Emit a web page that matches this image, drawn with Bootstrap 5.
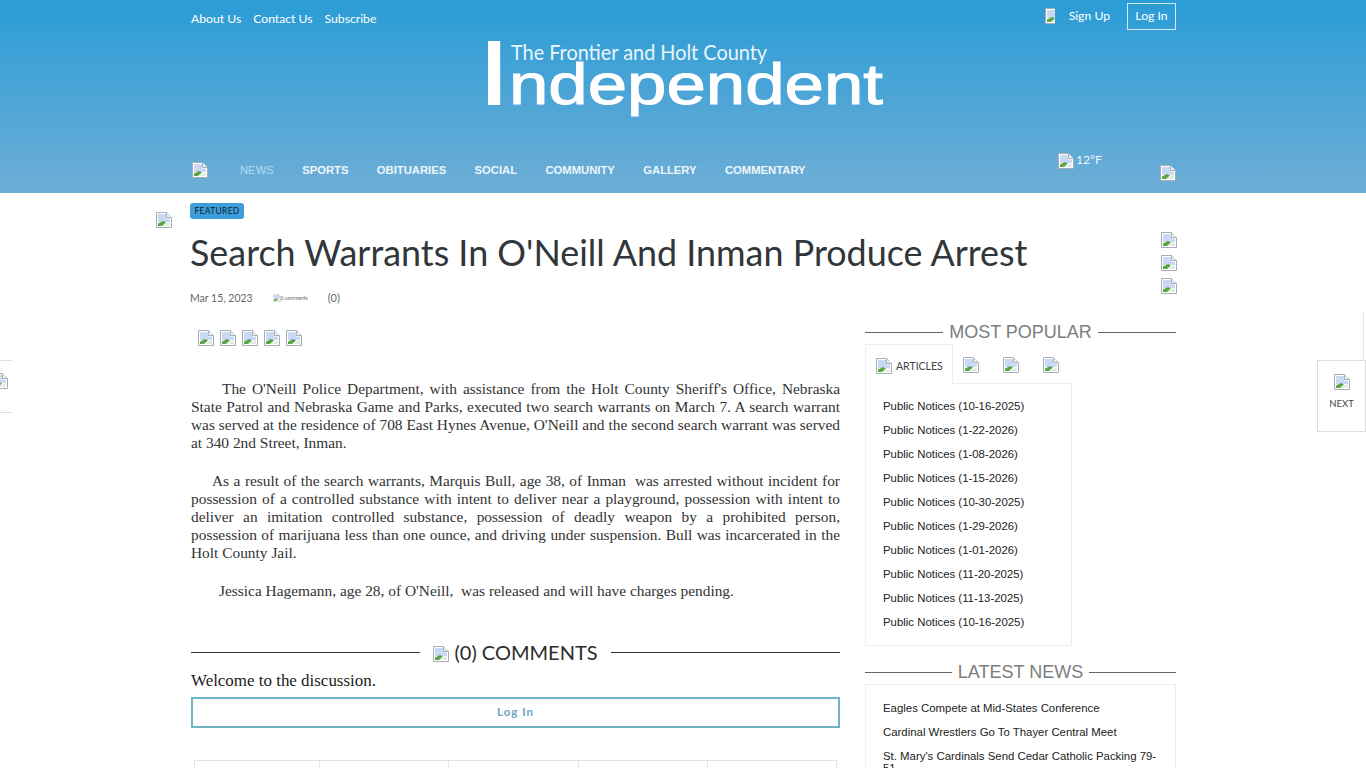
<!DOCTYPE html>
<html lang="en">
<head>
    <meta charset="UTF-8">
    <meta name="viewport" content="width=device-width, initial-scale=1, shrink-to-fit=no">
    <title>Search Warrants In O'Neill And Inman Produce Arrest</title>
    <link rel="stylesheet" href="https://cdn.jsdelivr.net/npm/bootstrap@5.3.0/dist/css/bootstrap.min.css">
    <style>
        html, body { height: 768px; overflow: hidden; }
        body { font-family: "Liberation Serif", serif; color: #222; background: #fff; position: relative; }
        a { color: inherit; text-decoration: none; }
        .ni { width: 16px; height: 16px; display: inline-block; flex: none; vertical-align: top; }
        .wrap { width: 985px; margin-left: 191px; }

        .site-head { height: 193px; background: linear-gradient(#2a9cd6, #6eaed6); color: #fff; }
        .head-top { height: 41px; font-family: Lato, sans-serif; font-size: 12.2px; }
        .top-links { gap: 12px; padding-top: 10px; }
        .top-right { padding-top: 3px; }
        .signup { margin: 0 17px 0 0; line-height: 25px; }
        .signup .ni { width: 10px; margin: 5px 14px 0 0; }
        .login-box { width: 49px; height: 27px; border: 1px solid #cfeaf7; line-height: 24px; text-align: center; }
        .logo-svg { display: block; margin-left: 283px; width: 420px; height: 80px; }
        .main-nav { height: 32px; margin-top: 30px; font: 700 11.25px "Liberation Sans", sans-serif; color: #eef6fb; }
        .main-nav .ni { margin: 11px 32px 0 1px; }
        .main-nav a { line-height: 38px; margin-right: 28.4px; }
        .main-nav a.on { color: #b4dbf0; font-weight: 400; }
        .temp { margin-right: 58px; font: 12.2px/14px Lato, sans-serif; }
        .temp span { padding-top: 2px; }
        .main-nav .temp .ni { margin: 2px 2px 0 0; }
        .main-nav .nav-last { margin: 14px 0 0 0; }

        .feat { width: 54px; height: 16px; margin: 10px 0 0 -1px; background: #3d9ed9; border-radius: 3px; color: #123; font: 8.5px/16px Lato, sans-serif; text-align: center; letter-spacing: .3px; }
        .hl { width: 985px; font: 400 35.9px/46px Lato, sans-serif; color: #30363a; margin: 11px 0 0 -1px; white-space: nowrap; }
        .meta { margin-top: 12px; margin-left: -1px; height: 22px; font: 10.5px/20px Lato, sans-serif; color: #666; }
        .meta .ni { width: 8px; height: 8px; margin: 6px 0 0 20px; }
        .meta small { font-size: 5px; margin-right: 20px; }
        .meta b { font-weight: 400; font-size: 11px; }

        .art { width: 649px; }
        .shr { gap: 6px; margin: 20px 0 0 7px; height: 16px; }
        .story { margin-top: 34px; font-size: 15.4px; line-height: 18px; text-align: justify; color: #333; }
        .story p { margin-bottom: 20px; }
        .i1 { text-indent: 31px; }
        .i2 { text-indent: 21px; }
        .i3 { text-indent: 28px; }
        .cm-head { margin-top: 40px; height: 24px; font: 20px/24px Lato, sans-serif; color: #2c2c2c; gap: 13px; }
        .cm-head .ni { margin: 6px 5px 0 0; }
        .cm-head hr, .side-h hr { flex: 1; margin: 0; opacity: 1; border-top: 1px solid #333; }
        .welcome { font-size: 16.95px; line-height: 20px; margin-top: 7px; }
        .log-btn { height: 31px; margin-top: 6px; border: 2px solid #71b2c6; color: #6aa7c4; font: 700 11.5px/25px Lato, sans-serif; text-align: center; letter-spacing: 1px; border-radius: 0; }
        .cm-grid { margin: 32px 3px 0; height: 20px; border: 1px solid #e4e4e4; }
        .cm-grid div { flex: 1 1 0; border-left: 1px solid #e4e4e4; }
        .cm-grid div:first-child { border-left: 0; flex: 0 0 124px; }

        .side { width: 311px; margin-left: 25px; margin-top: 12px; font: 11.4px/24px "Liberation Sans", sans-serif; color: #222; }
        .side-h { height: 20px; gap: 6px; color: #7d7d7d; font-size: 18px; line-height: 20px; }
        .side-h hr { border-top-color: #666; }
        .tabs-r { height: 40px; margin-top: 2px; }
        .tab-on { width: 88px; height: 40px; padding: 13px 0 0 10px; border: 1px solid #eee; border-bottom: 0; font: 10.5px/16px Lato, sans-serif; color: #444; background: #fff; position: relative; }
        .tab-on .ni { margin-right: 4px; }
        .tab-ic { width: 40px; padding: 13px 0 0 10px; }
        .pop { width: 207px; height: 263px; margin-top: -1px; padding: 10px 0 0 17px; border: 1px solid #eee; }
        .side-h.two { margin-top: 16px; }
        .news { height: 100px; margin-top: 2px; padding: 11px 17px 0; border: 1px solid #eee; }
        .news a { display: block; line-height: 12px; margin: 6px 0 12px; }

        /* off-canvas prev and next tabs */
        .pg-prev { position: absolute; left: -8px; top: 360px; width: 20px; height: 53px; border-top: 1px solid #ddd; border-bottom: 1px solid #ddd; background: #fff; overflow: hidden; }
        .pg-prev .ni { margin: 12px 0 0 0; }
        .pg-next { position: absolute; left: 1317px; top: 360px; width: 49px; height: 72px; border: 1px solid #ddd; background: #fff; text-align: center; font: 9.5px/14px Lato, sans-serif; color: #444; padding-top: 13px; }
        .pg-next .ni { display: block; margin: 0 auto 7px; }
        .pg-line { position: absolute; left: 1363px; top: 312px; height: 48px; border-left: 1px solid #e5e5e5; }
        .art-ic { position: absolute; left: 156px; top: 212px; }
        .share-side { position: absolute; left: 1161px; top: 232px; gap: 7px; }
    </style>
</head>
<body>

    <svg width="0" height="0" class="d-block position-absolute">
        <symbol id="nopic" viewBox="0 0 16 16">
            <path d="M.5.5h10l5 5v10H.5z" fill="#fff" stroke="#a4aeb3"/>
            <path d="M10.5.5v5h5" fill="#eef2f5" stroke="#a4aeb3"/>
            <path d="M2 2h8v4.5h4V10H2z" fill="#c9d8f4"/>
            <path d="M2 14v-2.5L7 9l3 1.5L6 14z" fill="#5aa646"/>
            <path d="M7 14l5-3.5 2 1V14z" fill="#e3ebe0"/>
        </symbol>
    </svg>

    <header class="site-head">
        <div class="wrap">
            <div class="head-top d-flex justify-content-between">
                <div class="top-links d-flex">
                    <a href="#">About Us</a>
                    <a href="#">Contact Us</a>
                    <a href="#">Subscribe</a>
                </div>
                <div class="top-right d-flex">
                    <a href="#" class="signup d-flex"><svg class="ni"><use href="#nopic" width="16" height="16"/></svg>Sign Up</a>
                    <a href="#" class="login-box">Log In</a>
                </div>
            </div>
            <a href="#" aria-label="Independent">
                <svg class="logo-svg" viewBox="0 0 420 80">
                    <text x="8" y="62" font-family="Liberation Sans" font-size="87" fill="#fff" stroke="#fff" stroke-width="4">I</text>
                    <text x="37" y="19" font-family="Lato" font-size="21" fill="#e9f6fc" textLength="256" lengthAdjust="spacingAndGlyphs">The Frontier and Holt County</text>
                    <text x="35" y="63" font-family="Liberation Sans" font-size="58" fill="#fff" stroke="#fff" stroke-width="1" textLength="374" lengthAdjust="spacingAndGlyphs">ndependent</text>
                </svg>
            </a>
            <nav class="main-nav d-flex">
                <svg class="ni"><use href="#nopic"/></svg>
                <a href="#" class="on">NEWS</a>
                <a href="#">SPORTS</a>
                <a href="#">OBITUARIES</a>
                <a href="#">SOCIAL</a>
                <a href="#">COMMUNITY</a>
                <a href="#">GALLERY</a>
                <a href="#">COMMENTARY</a>
                <div class="temp ms-auto d-flex"><svg class="ni"><use href="#nopic"/></svg><span>12°F</span></div>
                <svg class="ni nav-last"><use href="#nopic"/></svg>
            </nav>
        </div>
    </header>

    <svg class="ni art-ic"><use href="#nopic"/></svg>
    <div class="share-side d-flex flex-column">
        <svg class="ni"><use href="#nopic"/></svg>
        <svg class="ni"><use href="#nopic"/></svg>
        <svg class="ni"><use href="#nopic"/></svg>
    </div>

    <main class="wrap">
        <div class="feat">FEATURED</div>
        <h1 class="hl">Search Warrants In O'Neill And Inman Produce Arrest</h1>
        <div class="meta d-flex">
            <span>Mar 15, 2023</span>
            <svg class="ni"><use href="#nopic"/></svg>
            <small>0 comments</small>
            <b>(0)</b>
        </div>

        <div class="d-flex">
            <article class="art">
                <div class="shr d-flex">
                    <svg class="ni"><use href="#nopic"/></svg>
                    <svg class="ni"><use href="#nopic"/></svg>
                    <svg class="ni"><use href="#nopic"/></svg>
                    <svg class="ni"><use href="#nopic"/></svg>
                    <svg class="ni"><use href="#nopic"/></svg>
                </div>
                <div class="story">
                    <p class="i1">The O'Neill Police Department, with assistance from the Holt County Sheriff's Office, Nebraska State Patrol and Nebraska Game and Parks, executed two search warrants on March 7. A search warrant was served at the residence of 708 East Hynes Avenue, O'Neill and the second search warrant was served at 340 2nd Street, Inman.</p>
                    <p class="i2">As a result of the search warrants, Marquis Bull, age 38, of Inman&nbsp; was arrested without incident for possession of a controlled substance with intent to deliver near a playground, possession with intent to deliver an imitation controlled substance, possession of deadly weapon by a prohibited person, possession of marijuana less than one ounce, and driving under suspension. Bull was incarcerated in the Holt County Jail.</p>
                    <p class="i3">Jessica Hagemann, age 28, of O'Neill,&nbsp; was released and will have charges pending.</p>
                </div>
                <div class="cm-head d-flex align-items-center">
                    <hr>
                    <span class="d-flex"><svg class="ni"><use href="#nopic"/></svg>(0) COMMENTS</span>
                    <hr>
                </div>
                <div class="welcome">Welcome to the discussion.</div>
                <a href="#" class="log-btn d-block">Log In</a>
                <div class="cm-grid d-flex"><div></div><div></div><div></div><div></div><div></div></div>
            </article>

            <aside class="side">
                <div class="side-h d-flex align-items-center"><hr><span>MOST POPULAR</span><hr></div>
                <div class="tabs-r d-flex">
                    <div class="tab-on d-flex"><svg class="ni"><use href="#nopic"/></svg>ARTICLES</div>
                    <div class="tab-ic"><svg class="ni"><use href="#nopic"/></svg></div>
                    <div class="tab-ic"><svg class="ni"><use href="#nopic"/></svg></div>
                    <div class="tab-ic"><svg class="ni"><use href="#nopic"/></svg></div>
                </div>
                <div class="pop">
                    <a href="#" class="d-block">Public Notices (10-16-2025)</a>
                    <a href="#" class="d-block">Public Notices (1-22-2026)</a>
                    <a href="#" class="d-block">Public Notices (1-08-2026)</a>
                    <a href="#" class="d-block">Public Notices (1-15-2026)</a>
                    <a href="#" class="d-block">Public Notices (10-30-2025)</a>
                    <a href="#" class="d-block">Public Notices (1-29-2026)</a>
                    <a href="#" class="d-block">Public Notices (1-01-2026)</a>
                    <a href="#" class="d-block">Public Notices (11-20-2025)</a>
                    <a href="#" class="d-block">Public Notices (11-13-2025)</a>
                    <a href="#" class="d-block">Public Notices (10-16-2025)</a>
                </div>
                <div class="side-h two d-flex align-items-center"><hr><span>LATEST NEWS</span><hr></div>
                <div class="news">
                    <a href="#">Eagles Compete at Mid-States Conference</a>
                    <a href="#">Cardinal Wrestlers Go To Thayer Central Meet</a>
                    <a href="#">St. Mary's Cardinals Send Cedar Catholic Packing 79-51</a>
                </div>
            </aside>
        </div>
    </main>

    <a href="#" class="pg-prev"><svg class="ni"><use href="#nopic"/></svg></a>
    <div class="pg-line"></div>
    <a href="#" class="pg-next"><svg class="ni"><use href="#nopic"/></svg>NEXT</a>

</body>
</html>
